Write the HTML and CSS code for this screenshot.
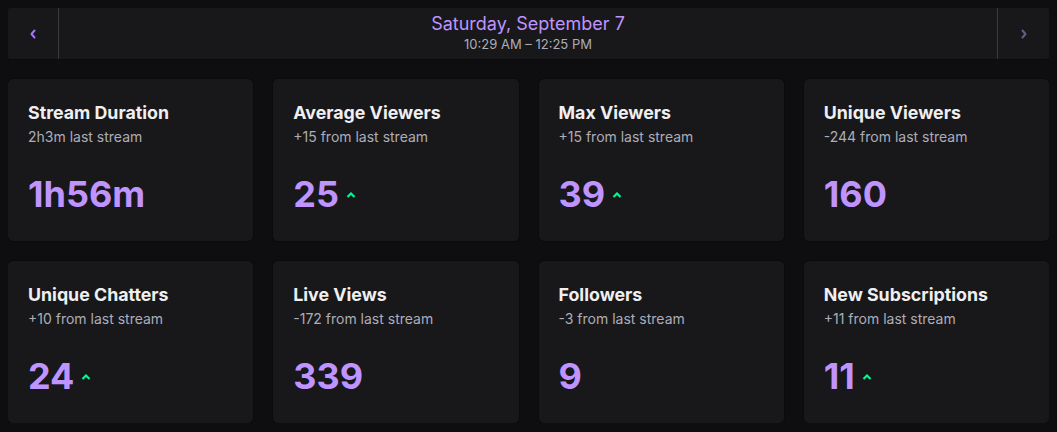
FILE: index.html
```html
<!DOCTYPE html>
<html>
<head>
<meta charset="utf-8">
<link rel="stylesheet" href="styles.css">
</head>
<body>
<div class="header">
  <button class="nav nav-left" aria-label="Previous">
    <svg width="8" height="10" viewBox="0 0 8 10"><path d="M5.5 1.5 L2.5 5 L5.5 8.5" fill="none" stroke="currentColor" stroke-width="2" stroke-linecap="round" stroke-linejoin="round"/></svg>
  </button>
  <div class="date">
    <div class="date-title">Saturday, September 7</div>
    <div class="date-time">10:29 AM – 12:25 PM</div>
  </div>
  <button class="nav nav-right" aria-label="Next">
    <svg width="8" height="10" viewBox="0 0 8 10"><path d="M2.5 1.5 L5.5 5 L2.5 8.5" fill="none" stroke="currentColor" stroke-width="2" stroke-linecap="round" stroke-linejoin="round"/></svg>
  </button>
</div>
<div class="grid">
  <div class="card"><div class="title">Stream Duration</div><div class="sub">2h3m last stream</div><div class="value">1h56m</div></div>
  <div class="card"><div class="title">Average Viewers</div><div class="sub">+15 from last stream</div><div class="value">25<span class="up"><svg width="10" height="6" viewBox="0 0 10 6"><path d="M1.5 5 L5 1.5 L8.5 5" fill="none" stroke="currentColor" stroke-width="2.2"/></svg></span></div></div>
  <div class="card"><div class="title">Max Viewers</div><div class="sub">+15 from last stream</div><div class="value">39<span class="up"><svg width="10" height="6" viewBox="0 0 10 6"><path d="M1.5 5 L5 1.5 L8.5 5" fill="none" stroke="currentColor" stroke-width="2.2"/></svg></span></div></div>
  <div class="card"><div class="title">Unique Viewers</div><div class="sub">-244 from last stream</div><div class="value">160</div></div>
  <div class="card"><div class="title">Unique Chatters</div><div class="sub">+10 from last stream</div><div class="value">24<span class="up"><svg width="10" height="6" viewBox="0 0 10 6"><path d="M1.5 5 L5 1.5 L8.5 5" fill="none" stroke="currentColor" stroke-width="2.2"/></svg></span></div></div>
  <div class="card"><div class="title">Live Views</div><div class="sub">-172 from last stream</div><div class="value">339</div></div>
  <div class="card"><div class="title">Followers</div><div class="sub">-3 from last stream</div><div class="value">9</div></div>
  <div class="card"><div class="title">New Subscriptions</div><div class="sub">+11 from last stream</div><div class="value">11<span class="up"><svg width="10" height="6" viewBox="0 0 10 6"><path d="M1.5 5 L5 1.5 L8.5 5" fill="none" stroke="currentColor" stroke-width="2.2"/></svg></span></div></div>
</div>
</body>
</html>
```
FILE: styles.css
```css
html, body {
  background: #0e0e10;
}
body {
  margin: 8px;
  font-family: Inter, "Noto Sans", sans-serif;
  color: #efeff1;
}
.header {
  display: flex;
  height: 51px;
  background: #18181b;
  border-radius: 2px;
  box-shadow: 0 0 0 1px #0b0b0c;
}
.nav {
  flex: none;
  background: transparent;
  border: none;
  padding: 0;
  display: flex;
  align-items: center;
  justify-content: center;
}
.nav-left {
  width: 51px;
  color: #a970ff;
  border-right: 1px solid #3a3a3d;
}
.nav-right {
  width: 52px;
  color: #6a5a8a;
  border-left: 1px solid #3a3a3d;
}
.date {
  flex: 1;
  display: flex;
  flex-direction: column;
  align-items: center;
  justify-content: center;
  padding-bottom: 2px;
}
.date-title {
  color: #bf94ff;
  font-size: 18px;
  line-height: 22px;
}
.date-time {
  margin-top: 1px;
  color: #adadb8;
  font-size: 13px;
  line-height: 16px;
}
.grid {
  margin-top: 20px;
  display: grid;
  grid-template-columns: repeat(4, 1fr);
  gap: 20px;
}
.card {
  background: #18181b;
  border-radius: 5px;
  height: 162px;
  box-sizing: border-box;
  padding: 23px 20px 0 20px;
  box-shadow: 0 0 0 1px #0b0b0c;
}
.title {
  font-size: 17.8px;
  font-weight: 700;
  line-height: 22px;
  color: #efeff1;
}
.sub {
  margin-top: 4px;
  font-size: 14px;
  line-height: 18px;
  color: #adadb8;
}
.value {
  margin-top: 27px;
  font-size: 36px;
  font-weight: 700;
  line-height: 42px;
  color: #bf94ff;
  display: flex;
  align-items: center;
}
.up {
  color: #00f593;
  display: inline-flex;
  margin-left: 7px;
  margin-top: 2px;
}
```
